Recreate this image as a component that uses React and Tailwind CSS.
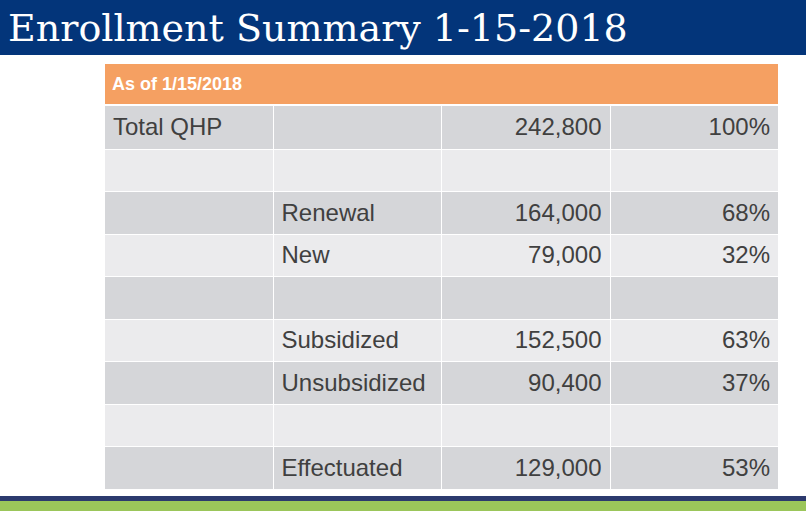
export default function App() {
  const rows = [
    ["Total QHP", "", "242,800", "100%"],
    ["", "", "", ""],
    ["", "Renewal", "164,000", "68%"],
    ["", "New", "79,000", "32%"],
    ["", "", "", ""],
    ["", "Subsidized", "152,500", "63%"],
    ["", "Unsubsidized", "90,400", "37%"],
    ["", "", "", ""],
    ["", "Effectuated", "129,000", "53%"],
  ];
  return (
    <div className="w-[806px] h-[511px] bg-white flex flex-col overflow-hidden">
      <div className="h-[55px] bg-[#03357a] flex items-center pl-[8px]">
        <span
          className="text-white text-[38px] leading-none whitespace-nowrap"
          style={{ fontFamily: '"DejaVu Serif", serif' }}
        >
          Enrollment Summary 1-15-2018
        </span>
      </div>
      <div className="ml-[105px] mt-[9px] w-[673px] flex flex-col" style={{ fontFamily: '"Liberation Sans", Arial, sans-serif' }}>
        <div className="h-[40px] bg-[#f5a062] flex items-center pl-[7px] text-white font-bold text-[18px]">
          As of 1/15/2018
        </div>
        <div className="mt-[2px] flex flex-col">
          {rows.map((r, i) => (
            <div
              key={i}
              className={`h-[42.5px] grid grid-cols-4 gap-px bg-white ${i > 0 ? "border-t border-white" : ""}`}
            >
              {r.map((c, j) => (
                <div
                  key={j}
                  className={`${i % 2 === 0 ? "bg-[#d5d6d9]" : "bg-[#ebebed]"} flex items-center text-[24px] text-[#404040] ${j >= 2 ? "justify-end pr-[8px]" : "pl-[8px]"}`}
                >
                  {c}
                </div>
              ))}
            </div>
          ))}
        </div>
      </div>
      <div className="flex-1" />
      <div className="h-[5px] bg-[#2c3a6e]" />
      <div className="h-[10px] bg-[#9bc65a]" />
    </div>
  );
}
